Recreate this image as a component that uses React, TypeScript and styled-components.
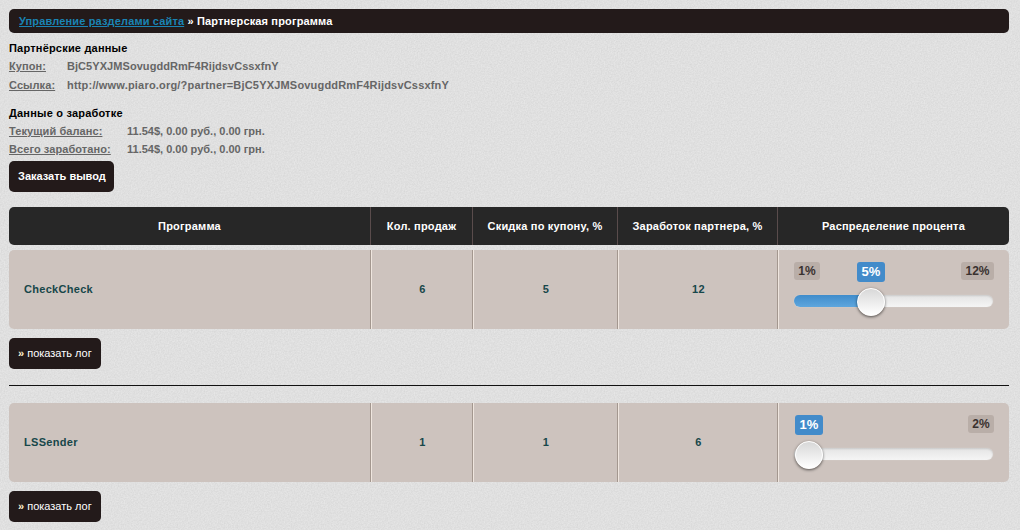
import React from "react";
import styled, { createGlobalStyle } from "styled-components";

const noise = `url("data:image/svg+xml,%3Csvg xmlns='http://www.w3.org/2000/svg' width='200' height='200'%3E%3Cfilter id='n'%3E%3CfeTurbulence type='fractalNoise' baseFrequency='0.7' numOctaves='3' stitchTiles='stitch'/%3E%3CfeColorMatrix values='0 0 0 0 0.5 0 0 0 0 0.5 0 0 0 0 0.5 0.5 0 0 0 -0.1'/%3E%3C/filter%3E%3Crect width='200' height='200' filter='url(%23n)'/%3E%3C/svg%3E")`;

const Global = createGlobalStyle`
  html, body { margin: 0; padding: 0; }
  body {
    background-color: #e6e6e6;
    background-image: ${noise};
    font: bold 11px "Liberation Sans", Arial, sans-serif;
    letter-spacing: 0.2px;
  }
`;

const Page = styled.div`
  width: 1000px;
  padding: 9px 11px 8px 9px;
`;

const Breadcrumb = styled.div`
  height: 24px;
  line-height: 24px;
  padding-left: 10px;
  background: #231a1a;
  border-radius: 5px;
  color: #fff;
  letter-spacing: 0.15px;
  a { color: #1a84b4; text-decoration: underline; }
`;

const SectionTitle = styled.div<{ $top: number }>`
  margin-top: ${(p) => p.$top}px;
  height: 14px;
  line-height: 14px;
  color: #000;
`;

const InfoRow = styled.div<{ $label: number; $top: number; $value: number }>`
  display: grid;
  grid-template-columns: ${(p) => p.$label}px 1fr;
  height: 14px;
  line-height: 14px;
  margin-top: ${(p) => p.$top}px;
  color: #666;
  letter-spacing: ${(p) => p.$value}px;
  span:first-child { text-decoration: underline; letter-spacing: 0.08px; }
`;

const DarkButton = styled.a<{ $w: number; $top: number }>`
  display: block;
  box-sizing: border-box;
  width: ${(p) => p.$w}px;
  height: 31px;
  line-height: 31px;
  margin-top: ${(p) => p.$top}px;
  padding-left: 9px;
  background: #231a1a;
  border-radius: 5px;
  color: #fff;
  letter-spacing: 0;
  b { color: #fff3d0; }
`;

const RegularButton = styled(DarkButton)`
  font-weight: normal;
`;

const columns = "361px 102px 145px 160px 232px";

const HeaderRow = styled.div`
  display: grid;
  grid-template-columns: ${columns};
  height: 38px;
  margin-top: 15px;
  background: #272727;
  border-radius: 5px;
  color: #fff;
`;

const HeaderCell = styled.div`
  display: flex;
  align-items: center;
  justify-content: center;
  box-sizing: border-box;
  & + & { border-left: 1px solid #5a4c4c; }
`;

const DataRow = styled.div<{ $top: number }>`
  display: grid;
  grid-template-columns: ${columns};
  height: 79px;
  margin-top: ${(p) => p.$top}px;
  background: #cdc3be;
  border-radius: 5px;
  color: #17474a;
  letter-spacing: 0.3px;
`;

const DataCell = styled.div`
  display: flex;
  align-items: center;
  justify-content: center;
  box-sizing: border-box;
  padding: 0 0 2px 2px;
  border-left: 1px solid #a3978f;
  box-shadow: inset 1px 0 0 #efe6df;
`;

const NameCell = styled.div`
  display: flex;
  align-items: center;
  padding: 0 0 2px 15px;
`;

const SliderCell = styled(DataCell)`
  display: block;
  position: relative;
  padding: 0;
`;

const Badge = styled.span<{ $x: number; $w: number; $active?: boolean }>`
  position: absolute;
  top: 12px;
  left: ${(p) => p.$x}px;
  width: ${(p) => p.$w}px;
  height: ${(p) => (p.$active ? 20 : 18)}px;
  line-height: ${(p) => (p.$active ? 20 : 18)}px;
  text-align: center;
  border-radius: 3px;
  font-size: ${(p) => (p.$active ? 13 : 12)}px;
  letter-spacing: 0;
  color: ${(p) => (p.$active ? "#fff" : "#3a3230")};
  background: ${(p) => (p.$active ? "#428bca" : "#b9aea8")};
`;

const Track = styled.div`
  position: absolute;
  left: 16px;
  top: 45px;
  width: 199px;
  height: 12px;
  border-radius: 6px;
  overflow: hidden;
  background: linear-gradient(#e4e4e4, #f5f5f5);
  box-shadow: inset 0 1px 2px rgba(0, 0, 0, 0.12), 0 0 1px rgba(255, 255, 255, 0.6);
`;

const Fill = styled.div`
  height: 100%;
  background: linear-gradient(#3f8ccb, #5ea6dd);
`;

const Thumb = styled.div`
  position: absolute;
  top: 38px;
  box-sizing: border-box;
  width: 28px;
  height: 28px;
  border-radius: 50%;
  background: linear-gradient(#d8d8d8, #fff);
  border: 1px solid #fff;
  box-shadow: 0 1px 3px rgba(0, 0, 0, 0.6);
`;

const Divider = styled.hr`
  height: 1px;
  margin: 16px 0 0;
  border: 0;
  background: #111;
`;

type Row = {
  name: string; sales: number; coupon: number; partner: number;
  badges: { text: string; x: number; w: number; active?: boolean }[];
  thumb: number; fill: number;
};

const rows: Row[] = [
  {
    name: "CheckCheck", sales: 6, coupon: 5, partner: 12,
    badges: [
      { text: "1%", x: 16, w: 26 },
      { text: "5%", x: 79, w: 28, active: true },
      { text: "12%", x: 183, w: 33 },
    ],
    thumb: 79, fill: 80,
  },
  {
    name: "LSSender", sales: 1, coupon: 1, partner: 6,
    badges: [
      { text: "1%", x: 17, w: 28, active: true },
      { text: "2%", x: 190, w: 26 },
    ],
    thumb: 17, fill: 0,
  },
];

export default function App() {
  return (
    <Page>
      <Global />
      <Breadcrumb><a>Управление разделами сайта</a> » Партнерская программа</Breadcrumb>
      <SectionTitle $top={8}>Партнёрские данные</SectionTitle>
      <InfoRow $label={58} $top={4} $value={0.06}><span>Купон:</span><span>BjC5YXJMSovugddRmF4RijdsvCssxfnY</span></InfoRow>
      <InfoRow $label={58} $top={5} $value={0.19}><span>Ссылка:</span><span>http://www.piaro.org/?partner=BjC5YXJMSovugddRmF4RijdsvCssxfnY</span></InfoRow>
      <SectionTitle $top={14}>Данные о заработке</SectionTitle>
      <InfoRow $label={118} $top={4} $value={0}><span>Текущий баланс:</span><span>11.54$, 0.00 руб., 0.00 грн.</span></InfoRow>
      <InfoRow $label={118} $top={4} $value={0}><span>Всего заработано:</span><span>11.54$, 0.00 руб., 0.00 грн.</span></InfoRow>
      <DarkButton $w={105} $top={5}>Заказать вывод</DarkButton>
      <HeaderRow>
        <HeaderCell>Программа</HeaderCell>
        <HeaderCell>Кол. продаж</HeaderCell>
        <HeaderCell>Скидка по купону, %</HeaderCell>
        <HeaderCell>Заработок партнера, %</HeaderCell>
        <HeaderCell>Распределение процента</HeaderCell>
      </HeaderRow>
      {rows.map((r, i) => (
        <React.Fragment key={r.name}>
          {i > 0 && <Divider />}
          <DataRow $top={i === 0 ? 5 : 17}>
            <NameCell>{r.name}</NameCell>
            <DataCell>{r.sales}</DataCell>
            <DataCell>{r.coupon}</DataCell>
            <DataCell>{r.partner}</DataCell>
            <SliderCell>
              {r.badges.map((b) => (
                <Badge key={b.text} $x={b.x} $w={b.w} $active={b.active}>{b.text}</Badge>
              ))}
              <Track><Fill style={{ width: r.fill }} /></Track>
              <Thumb style={{ left: r.thumb }} />
            </SliderCell>
          </DataRow>
          <RegularButton $w={92} $top={9}><b>»</b> показать лог</RegularButton>
        </React.Fragment>
      ))}
    </Page>
  );
}
